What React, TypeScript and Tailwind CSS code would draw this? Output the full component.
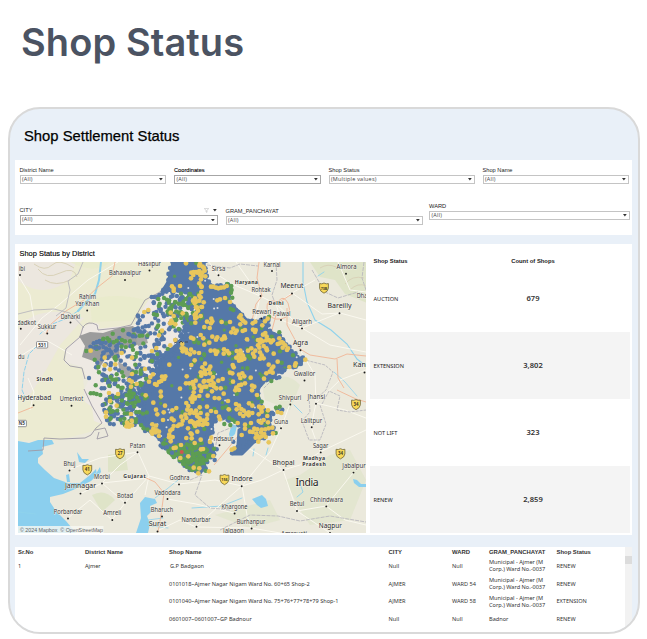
import React from "react";

type Pt = [number, number];

/* ---------- helpers for the point layer ---------- */

function createRandom(seed: number) {
  let s = seed;
  return () => {
    s = (s * 1664525 + 1013904223) % 4294967296;
    return s / 4294967296;
  };
}

function inside(x: number, y: number, poly: Pt[]) {
  let hit = false;
  for (let i = 0, j = poly.length - 1; i < poly.length; j = i++) {
    const [xi, yi] = poly[i];
    const [xj, yj] = poly[j];
    if (yi > y !== yj > y && x < ((xj - xi) * (y - yi)) / (yj - yi) + xi) hit = !hit;
  }
  return hit;
}

function scatter(poly: Pt[], count: number, seed: number): Pt[] {
  const rnd = createRandom(seed);
  const xs = poly.map((p) => p[0]);
  const ys = poly.map((p) => p[1]);
  const x0 = Math.min(...xs);
  const y0 = Math.min(...ys);
  const w = Math.max(...xs) - x0;
  const h = Math.max(...ys) - y0;
  const out: Pt[] = [];
  for (let n = 0; out.length < count && n < count * 30; n++) {
    const x = x0 + rnd() * w;
    const y = y0 + rnd() * h;
    if (inside(x, y, poly)) out.push([x, y]);
  }
  return out;
}

/* markers that straddle the border of an area, so its edge is bumpy */
function alongEdge(poly: Pt[], step: number, jitter: number, seed: number): Pt[] {
  const rnd = createRandom(seed);
  const out: Pt[] = [];
  poly.forEach(([x, y], i) => {
    const [nx, ny] = poly[(i + 1) % poly.length];
    const len = Math.hypot(nx - x, ny - y);
    for (let d = 0; d < len; d += step) {
      out.push([x + ((nx - x) * d) / len + (rnd() - 0.5) * jitter, y + ((ny - y) * d) / len + (rnd() - 0.5) * jitter]);
    }
  });
  return out;
}

function parse(list: string, ox: number, oy: number): Pt[] {
  return list
    .trim()
    .split(/\s+/)
    .map((p) => {
      const [x, y] = p.split(",").map(Number);
      return [ox + x / 3, oy + y / 3];
    });
}

const points = (poly: Pt[]) => poly.map((p) => p.join(",")).join(" ");

const BLUE = "#5578a8";
const GREEN = "#5d9d53";
const YELLOW = "#e8c65c";

const dense: Pt[] = [
  [173, 260], [205, 260], [204, 274], [207, 281], [215, 287], [229, 285], [230, 292], [229, 302], [240, 312],
  [248, 321], [255, 323], [263, 321], [267, 320], [267, 330], [276, 334], [282, 338], [290, 350], [297, 357],
  [304, 359], [301, 363], [289, 367], [278, 371], [273, 378], [266, 380], [260, 387], [257, 395], [258, 403],
  [263, 411], [271, 412], [269, 418], [272, 431], [261, 438], [248, 443], [243, 432], [240, 424], [228, 418],
  [217, 418], [213, 424], [211, 434], [205, 441], [213, 446], [214, 455], [205, 460], [205, 468], [197, 472],
  [186, 466], [176, 455], [164, 447], [159, 438], [146, 430], [139, 421], [144, 405], [141, 393], [149, 383],
  [157, 375], [160, 361], [168, 351], [176, 345], [184, 335], [189, 322], [197, 313], [196, 297], [184, 290],
  [171, 291], [162, 291], [168, 281],
];

const west: Pt[] = [
  [152, 298], [170, 293], [199, 302], [190, 324], [173, 344], [160, 360], [158, 374], [144, 385], [140, 421],
  [124, 424], [106, 420], [102, 400], [113, 394], [98, 378], [98, 361], [90, 347], [96, 341], [118, 336],
  [132, 332], [136, 315], [143, 308],
];
const southWest: Pt[] = [
  [103, 399], [125, 387], [145, 378], [150, 430], [124, 426], [106, 422],
];
const northGreen: Pt[] = [
  [178, 294], [200, 291], [203, 318], [190, 327], [174, 322], [166, 314],
];
const southGreen: Pt[] = [
  [158, 437], [169, 446], [184, 444], [204, 446], [211, 454], [203, 469], [194, 472], [184, 465], [171, 456],
];
const midBlue: Pt[] = [
  [155, 340], [185, 325], [195, 345], [165, 380], [140, 405], [115, 405], [128, 375],
];
const tail: Pt[] = [
  [239, 430], [262, 432], [252, 444], [242, 454], [233, 454], [238, 445],
];

const yellowEast = parse(
  `30,12 38,20 44,32 28,33 18,36 10,45 35,48 46,49 3,55 34,80 63,80 70,80 78,83 85,85 93,83 102,82 110,78 9,122 28,122 32,112
  34,141 24,152 18,160 14,165 20,172 16,188 32,168 82,121 90,118 105,114 120,126 43,201 16,174 51,185 64,176 67,184 63,190
  95,186 120,186 148,172 152,166 155,178 160,183 166,188 151,193 130,206 140,212 136,219 124,217 158,213 165,210 59,204 3,233
  10,236 40,235 67,230 58,248 43,254 32,225 78,239 82,232 96,238 105,235 103,229 171,238 188,190 196,185 189,209 197,210
  195,216 233,176 225,184 217,196 219,224 226,219 230,230 212,239 204,240 210,248 218,244 229,241 237,240 249,241 243,247
  204,256 208,263 221,258 229,265 196,272 184,265 174,272 268,235 275,246 269,250 263,252 280,249 286,256 278,263 291,270
  294,265 3,269 13,277 27,279 62,272 74,272 82,275 78,282 102,268 112,273 101,281 117,280 140,273 151,272 154,280 146,284
  159,287 139,293 151,294 163,296 155,300 147,302 189,281 193,290 210,277 215,286 210,296 221,295 231,271 251,281 263,305
  236,314 250,320 245,326 239,335 229,340 248,338 222,356 14,301 4,315 37,322 45,311 61,320 57,328 45,331 38,340 47,342
  60,340 69,351 64,361 55,363 43,363 17,362 32,337 10,374 35,384 33,393 49,380 61,375 71,370 85,362 71,379 79,385 92,385
  66,394 74,414 87,415 8,408 14,416 7,426 53,407 101,401 114,423 128,315 131,322 120,338 127,340 98,357 129,365 147,344
  157,340 163,349 151,354 154,374 165,370 147,376 139,383 147,390 136,391 182,353 186,377 193,380 186,391 201,405
  298,321 317,310 315,317 346,299 18,452 29,442 51,440 63,453 78,456 22,469 31,480 4,483 12,491 23,487 45,484 52,492 38,495
  29,493 16,498 51,477 52,464 87,470 90,478 116,448 138,432 147,437 140,448 154,447 161,452 150,461 160,468 169,461 176,457
  176,466 187,459 187,437 207,440 213,446 218,442 215,455 177,430 143,489 234,451 232,468 263,456 274,459 221,480 214,488
  234,487 206,463 206,483 183,489 165,494 165,506 180,515 193,506 188,516 202,508 215,509 226,508 236,505 247,503 249,520
  213,517 223,522 227,531 215,529 199,521 203,528 155,525 208,533 197,533 205,545 236,547 64,533 60,546 5,535 39,567
  33,568 70,588 133,565 125,569 57,634 25,640 2,520`,
  190, 260,
);
const yellowWest = parse(
  `333,10 387,24 373,17 382,38 376,45 367,38 356,36 349,38 378,58 373,70 380,80 379,96 291,79 296,86 296,93 315,78 373,107 360,115
  365,124 359,130 363,142 386,127 381,141 366,143 220,150 208,156 287,158 323,160 361,174 296,168 289,182 285,190 292,188
  301,193 261,212 252,226 244,264 231,273 286,256 322,252 301,240 320,265 326,265 333,269 335,278 323,274 345,283 140,279
  89,293 171,293 89,316 121,313 47,272 105,328 171,342 163,360 185,372 168,380 170,365 210,327 234,343 226,351
  222,365 240,372 252,366 261,350 271,349 268,357 259,363 245,375 283,314 315,386 335,349 333,370 343,370 353,366 379,347
  386,365 374,377 358,384 387,380 354,414 347,416 360,412 356,397 373,408 212,406 258,409 257,395 102,399 129,402 105,423
  125,437 93,470 93,457 168,462 156,488 160,493 171,496 154,499 162,500 170,482 235,428 243,449 247,463 266,457
  264,480 292,451 304,444 334,429 340,438 337,449 344,460 331,464 348,451 290,476 296,481 270,437 357,459 366,464 377,459
  319,470 323,482 334,474 320,493 313,494 345,485 308,498 296,498 292,507 286,512 283,524 293,531 282,532 354,487 365,489
  371,493 374,475 385,482 388,491 339,505 232,493 235,506 229,515 237,510 243,497 245,511 252,515 242,517 232,521 252,528
  367,515 350,523 334,534 377,539 287,544 302,563 296,564 318,555 359,549 340,589 316,594 373,625 356,623`,
  75, 260,
);
const blueExtra = parse(
  `230,111 237,111 246,110 253,105 194,181 189,190 257,153 250,182 221,198 176,210 174,229 190,214 267,169 262,101 265,89 288,110
  56,250 65,246 72,246 81,249 92,248 61,263 72,263 85,261 104,256 95,271 110,281 86,278 98,294 67,308 42,354 80,385 88,385
  83,435 88,450 96,480 105,491 141,439 116,493 291,578 276,561 100,364 82,361 63,322 108,310`,
  75, 260,
);
const greenExtra = parse(
  `144,211 113,221 103,240 85,236 97,235 59,299 70,321 47,400 56,400 65,402 76,405 62,376 116,247 34,273 250,117 254,131 282,128
  267,114 246,165 237,163 150,244 165,244 256,216 172,258 174,269 125,343 145,349 150,495 107,475 122,299 105,415`,
  75, 260,
);
const blueEast = parse(
  `262,449 277,449 250,462 268,455 336,295 331,302 310,322 283,331 276,337 260,354 268,352 72,582 80,568 74,600 52,606 40,622
  30,637 172,545 178,548 160,560 146,575 126,580 130,545 235,182 225,190 259,273 251,503 244,515`,
  190, 260,
);
const greenEast = parse(
  `19,9 28,75 124,78 112,72 125,90 123,98 127,113 17,240 13,246 26,248 46,250 51,243 43,204 122,146 130,150 93,182 153,207
  108,190 268,217 270,274 309,286 275,308 318,316 244,363 106,279 116,285 127,279 200,241 245,230 237,170 178,269 174,288
  180,295 172,325 155,358 217,349 71,340 27,350 52,386 106,383 140,401 205,413 215,425 98,443 109,440 120,450 118,474
  127,479 103,492 121,495 135,485 30,440 73,447 258,443 269,440 32,455 11,502 43,507 257,519 176,498 230,458 2,384 34,297
  12,306 87,271 42,283 12,548 24,554 35,550 46,566 27,578 11,589 50,600 20,608 72,566 47,632`,
  190, 260,
);

function Dots({ list, color, r = 2.2 }: { list: Pt[]; color: string; r?: number }) {
  return (
    <g fill={color}>
      {list.map(([x, y], i) => (
        <circle key={i} cx={x.toFixed(1)} cy={y.toFixed(1)} r={r} />
      ))}
    </g>
  );
}

/* ---------- map labels ---------- */

type Label = { t: string; x: number; y: number; w?: number; big?: boolean; dot?: Pt; region?: boolean };

const labels: Label[] = [
  { t: "Hasilpur", x: 149.5, y: 265.7, w: 23, dot: [149.5, 270.5] },
  { t: "Bahawalpur", x: 125, y: 275.3, w: 32, dot: [125, 280] },
  { t: "Rahim", x: 87.5, y: 299, w: 17 },
  { t: "Yar Khan", x: 87.2, y: 306, w: 24, dot: [87.2, 310.5] },
  { t: "Daharki", x: 70.5, y: 318.5, w: 19.5, dot: [70.5, 322.5] },
  { t: "dadkot", x: 26.5, y: 325, w: 19, dot: [20.8, 328.8] },
  { t: "Sukkur", x: 47, y: 329, w: 18.5, dot: [47.3, 333.5] },
  { t: "ibi", x: 22, y: 271, w: 6, dot: [20, 275] },
  { t: "du", x: 21.3, y: 359, w: 6.5 },
  { t: "Sindh", x: 44.7, y: 380.5, w: 16.5, region: true },
  { t: "Sirsa", x: 218.5, y: 270.6, w: 13.5, dot: [218.5, 275.3] },
  { t: "Karnal", x: 272, y: 266.7, w: 17, dot: [272, 271] },
  { t: "Haryana", x: 246.3, y: 283.5, w: 23, region: true },
  { t: "Rohtak", x: 261, y: 291.5, w: 19, dot: [260.5, 296] },
  { t: "Meerut", x: 292, y: 288, w: 23, big: true, dot: [292, 293.5] },
  { t: "Almora", x: 346.5, y: 269.2, w: 20, dot: [346, 273.7] },
  { t: "Delhi", x: 276, y: 305, w: 15, region: true },
  { t: "Rewari", x: 261.7, y: 313.7, w: 19, dot: [261.5, 318.5] },
  { t: "Palwal", x: 281.7, y: 315.5, w: 17.5, dot: [281, 320] },
  { t: "Aligarh", x: 302, y: 323.7, w: 20, dot: [302, 328.4] },
  { t: "Bareilly", x: 339.5, y: 308, w: 24, big: true, dot: [339.5, 313.2] },
  { t: "Agra", x: 300.5, y: 344.8, w: 15, big: true, dot: [300.5, 350.2] },
  { t: "Gwalior", x: 304.5, y: 376, w: 21.5, dot: [304.5, 380.5] },
  { t: "Kanp", x: 361.6, y: 367.3, w: 17, big: true, dot: [364.5, 372.5] },
  { t: "Dha", x: 362, y: 297.6, w: 10.5 },
  { t: "Hyderabad", x: 34.3, y: 400, w: 34, big: true, dot: [33.6, 405.2] },
  { t: "Umerkot", x: 71.5, y: 401.2, w: 23.5, dot: [71.5, 405.7] },
  { t: "Patan", x: 137.5, y: 447.7, w: 15.5, dot: [137.5, 452.2] },
  { t: "Bhuj", x: 69.5, y: 466, w: 12, dot: [69.5, 470.5] },
  { t: "Morbi", x: 102, y: 479, w: 16, dot: [102, 483.5] },
  { t: "Gujarat", x: 134.5, y: 478.3, w: 22.5, region: true },
  { t: "Godhra", x: 179.5, y: 480, w: 20, dot: [179, 484.4] },
  { t: "Jamnagar", x: 80.5, y: 488.3, w: 31, big: true, dot: [80.5, 493.6] },
  { t: "Botad", x: 125, y: 498.3, w: 16, dot: [125, 502.8] },
  { t: "Vadodara", x: 167.5, y: 494.5, w: 26, dot: [167.5, 499] },
  { t: "Porbandar", x: 68, y: 514, w: 28.5, dot: [68, 518.5] },
  { t: "Amreli", x: 112.3, y: 515.4, w: 18, dot: [112.3, 520] },
  { t: "Bharuch", x: 162, y: 512, w: 22.5, dot: [162, 516.5] },
  { t: "Surat", x: 157.5, y: 526.3, w: 17.5, big: true, dot: [157.5, 531.5] },
  { t: "Shivpuri", x: 290, y: 399.7, w: 22.5, dot: [290.3, 404.5] },
  { t: "Jhansi", x: 316.3, y: 399.2, w: 17.5, dot: [316, 403.8] },
  { t: "Guna", x: 281, y: 423.7, w: 14, dot: [281, 428.2] },
  { t: "Lalitpur", x: 311.5, y: 422.5, w: 21.5, dot: [311.7, 427.2] },
  { t: "Sagar", x: 320.7, y: 447.7, w: 15.5, dot: [320.7, 452.4] },
  { t: "Madhya", x: 314, y: 460, w: 22, region: true },
  { t: "Pradesh", x: 314, y: 466.4, w: 23.5, region: true },
  { t: "Jabalpur", x: 354, y: 468, w: 23.5, dot: [353.5, 472.6] },
  { t: "ndsaur", x: 223.5, y: 441, w: 20, dot: [219.5, 445.3] },
  { t: "Bhopal", x: 283.5, y: 464.7, w: 22, big: true, dot: [283.5, 470] },
  { t: "Indore", x: 242, y: 480.9, w: 21, big: true, dot: [241.7, 486.3] },
  { t: "Betul", x: 297, y: 506.4, w: 14.5, dot: [297, 511] },
  { t: "Chhindwara", x: 326.5, y: 501.7, w: 33, dot: [326.3, 506.4] },
  { t: "Khargone", x: 234.5, y: 508.8, w: 26, dot: [234.6, 513.5] },
  { t: "Nandurbar", x: 196, y: 522.4, w: 29, dot: [196.5, 526.8] },
  { t: "Burhanpur", x: 251, y: 524, w: 28.5, dot: [251.6, 528.5] },
  { t: "Nagpur", x: 330.3, y: 528, w: 23, big: true, dot: [330, 533] },
  { t: "Jalgaon", x: 233.5, y: 533.4, w: 21 },
  { t: "Amravati", x: 294, y: 535.8, w: 26 },
];

function MapLabels() {
  return (
    <g textAnchor="middle" fontFamily="'Noto Sans', 'Open Sans', sans-serif" stroke="#f6f4ea" strokeLinejoin="round" paintOrder="stroke">
      {labels.map((l) => (
        <g key={l.t}>
          <text
            x={l.x}
            y={l.y}
            fontSize={l.big ? 7.1 : l.region ? 5.2 : 6.3}
            fontWeight={l.region ? 700 : 400}
            strokeWidth={0.9}
            fill={l.big ? "#26272a" : "#36373b"}
            textLength={l.w}
            lengthAdjust={l.region ? "spacing" : "spacingAndGlyphs"}
          >
            {l.t}
          </text>
          {l.dot && <circle cx={l.dot[0]} cy={l.dot[1]} r={0.95} fill="#1d1d1d" stroke="none" />}
        </g>
      ))}
      <text x={307} y={486.3} fontSize={10.4} strokeWidth={1} fill="#1d1d1d" textLength={23}>
        India
      </text>
    </g>
  );
}

function Shield({ x, y, t }: { x: number; y: number; t: string }) {
  return (
    <g>
      <path
        d={`M${x - 4.4} ${y - 4.4}q2.2 .8 4.4 -.6q2.2 1.4 4.4 .6v4.6q-.4 3.4 -4.4 5q-4 -1.6 -4.4 -5z`}
        fill="#f8d95a"
        stroke="#6f6436"
        strokeWidth={0.8}
      />
      <text x={x} y={y + 1.7} fontSize={t.length > 2 ? 3.7 : 4.4} fontWeight={700} textAnchor="middle" fill="#3d3a28" fontFamily="'Noto Sans', sans-serif">
        {t}
      </text>
    </g>
  );
}

function RoadBox({ x, y, w, t }: { x: number; y: number; w: number; t: string }) {
  return (
    <g>
      <rect x={x} y={y} width={w} height={6.4} rx={0.8} fill="#fff" stroke="#77797c" strokeWidth={0.8} />
      <text x={x + w / 2} y={y + 4.9} fontSize={4.6} fontWeight={700} textAnchor="middle" fill="#444" fontFamily="'Noto Sans', sans-serif">
        {t}
      </text>
    </g>
  );
}

function DistrictMap() {
  return (
    <svg viewBox="18 262 348.5 271" className="block h-[271px] w-[348.5px] shrink-0" role="img" aria-label="Shop Status by District">
      <rect x="18" y="262" width="349" height="271" fill="#ebe9dc" />
      <path d="M18 262H178L170 285 150 298 143 308 135 325 118 330 95 328 90 325 85 335 66 349 65 364 82 368 84 388 103 424 97 430 60 440 18 441z" fill="#ecebd2" />
      <path d="M18 281Q45 300 70 279L76 262H18zM18 330Q30 310 62 312L84 318 60 345 46 370 30 395 18 400z" fill="#ece7df" />
      <path d="M70 262Q95 275 110 262zM90 300Q115 292 145 300L136 320 92 322z" fill="#e8ebc9" opacity=".7" />
      <g fill="#dbe3c2" opacity=".75">
        <path d="M310 262H367V303L345 294 335 280 320 277z" />
        <path d="M108 455L125 452 128 470 108 472z" />
        <path d="M285 480L300 475 330 455 350 450 366 480 350 520 310 525 300 510z" opacity=".6" />
        <path d="M215 515L270 500 280 520 250 528z" opacity=".6" />
        <path d="M262 385Q285 368 300 385L290 410 265 400z" opacity=".6" />
        <path d="M92 495Q105 488 115 500L102 512z" />
      </g>
      <g fill="none" stroke="#d9d2b8" strokeWidth="1">
        <path d="M34 264Q45 272 52 265T74 268M38 269Q46 280 60 273T77 277M45 280Q56 287 70 280" />
        <path d="M345 284Q352 275 364 278M350 290Q358 282 366 286M320 268Q328 263 336 267" />
      </g>
      <path d="M66 348Q83 336 81 331Q86 323 94 323T98 329L112 327 134 325 137 318 150 298 200 294 200 340 130 420 102 424 94 421 92 407 85 402 84 390 88 381 83 367 66 362z" fill="#eee9e3" />

      {/* water */}
      <g fill="#8bcfee">
        <path d="M18 441L29 443 38 440 52 440 54 444 42 447 43 454 38 458 38 463 45 470 54 478 68 483 80 483 90 475 96 469 97 475 91 481 73 490 63 494 50 497 50 502 56 511 66 521 76 533H18z" />
        <path d="M136 533L141 518 140 503 145 497 155 499 157 503 150 506 151 512 147 516 150 524 148 533z" />
        <path d="M77 452L82 459 89 459 85 463 79 462zM66 475L69 474 70 482 67 482zM97 472L100 467 101 472 97 477z" />
        <path d="M232 424L237 426 235 434 230 439 229 434zM252 499L262 495 266 499 268 506 261 508 257 505z" />
        <path d="M353 479L357 480 361 484 366 484V487L359 487 354 483z" />
      </g>
      <g fill="none" stroke="#8fd2ec" strokeLinecap="round">
        <path d="M101 262L99 280 95 294 86 302 78 311" strokeWidth="2" />
        <path d="M78 311L65 319 50 325 40 334M37 346L29 354 24 372 22 390 25 397" strokeWidth="1" strokeDasharray="4 2" />
        <path d="M303 262L303 282 307 302 315 320 331 330 347 344 357 359 366 366" strokeWidth="1.1" />
        <path d="M318 276L324 272M302 413L294 405M300 484L303 492 297 497M254 449L253 456M268 448L266 455M18 512L36 514M192 508L222 506 242 498" strokeWidth=".9" />
        <path d="M155 498L167 489 178 480M148 520L163 518M152 526L168 528M334 372L345 382 357 396" strokeWidth=".8" />
      </g>

      {/* roads */}
      <g fill="none" stroke="#faf8ef" strokeWidth="1">
        <path d="M18 275L30 295 35 325 47 333M20 345L42 318 60 304 88 280 118 262M22 355L46 340 72 355M28 378L34 392 30 410" />
        <path d="M209 262L218 275 232 284 260 296 276 304 292 293 315 280M292 293L322 314 340 313 366 320M276 304L281 320 302 328 339 313M276 304L302 328 330 345 366 352" />
        <path d="M300 350L315 375 316 403 311 427 320 452 300 465 283 470M316 403L340 380 366 370M316 403L345 410 366 418M320 452L345 440 366 430M290 404L281 428 270 452 242 486M283 470L262 480 242 486 220 505 196 527" />
        <path d="M242 486L247 515 251 528 280 533M283 470L297 511 330 533M326 506L353 473M326 506L345 520 366 525M297 511L326 506" />
        <path d="M138 452L120 465 102 483 80 494M138 452L149 476 125 503 112 520M149 476L179 484 215 480 242 486M149 476L145 495M102 483L125 503M68 518L90 500 112 520M68 470L100 458 138 452M167 499L196 504 234 513M157 531L180 520 196 527 251 528M102 483L149 478" />
        <path d="M236 262L260 296 255 322M338 262L350 290 366 292M235 440L258 454 283 470" />
      </g>
      <g fill="none" stroke="#f1b596" strokeWidth=".9">
        <path d="M115 262L112 276 98 287 84 300 66 311 50 325 46 334M18 413L33 407" />
        <path d="M259 262L257 278 262 296 256 304 252 320M278 302Q266 298 267 308Q269 321 281 319T288 303Q283 294 278 302" />
        <path d="M276 304L292 294M287 308L287 325 300 349 310 355 335 359 347 354 366 356M337 359L338 378 344 388M276 315L272 330 270 343M214 465L230 446 238 436M144 477L155 482 164 493 161 515 158 532M337 390L356 399 366 402" />
      </g>
      <g fill="none" stroke="#b9b8bd" strokeWidth=".9">
        <path d="M83 262L78 274 68 281 70 290 66 308 56 316M18 314L34 310 54 309 70 313 84 328" />
        <path d="M178 262L171 278 160 292 145 300 141 307 131 325 118 328 98 330 97 325Q88 320 83 327L80 337 66 349 64 360 70 366 82 368 85 379M84 389L92 406 102 423 96 428 91 435 85 438 60 439 44 438 43 450 28 451M95 430L105 428 108 436 97 439 99 432" stroke="#9e9aa5" />
        <path d="M207 265L230 268 240 264 258 266M276 262L277 280 272 295 275 303M312 270L325 292 338 298 358 292M364 262L362 278 366 290" strokeDasharray="4 1" />
        <path d="M264 388L280 372 305 360 325 365 333 372 326 390 318 397M322 404L329 391 340 396 337 410 350 412 366 410M309 397L310 412 302 421 309 440 320 440 326 424 320 405" strokeDasharray="3 1" />
        <path d="M190 480L202 475 195 495 210 508 230 510M220 530L250 515 278 516 300 521 330 516 366 522M215 450L218 433 240 424" strokeDasharray="4 1" />
      </g>

      {/* desert block behind the markers */}
      <path d="M79 336L90 332 103 333 118 328 133 326 139 332 139 344 130 348 119 345 120 361 107 356 97 372 96 362 82 357 85 346z" fill="#9c9c9c" />
      <path d="M133 327L145 333 148 343 138 346zM118 362L140 372 132 380 120 374zM146 330l5 4-3 4z" fill="#a5a5a5" />

      <g>
        <polygon points={points(dense)} fill={BLUE} stroke={BLUE} strokeWidth="2" strokeLinejoin="round" />
        <Dots list={alongEdge(dense, 3.6, 3.4, 8)} color={BLUE} r={2.3} />
        <Dots list={scatter(dense, 34, 44)} color="#d9dde0" r={1} />
        <polygon points={points(tail)} fill={BLUE} stroke={BLUE} strokeWidth="3" strokeLinejoin="round" />
        <Dots list={scatter(west, 165, 7)} color={BLUE} />
        <Dots list={scatter(midBlue, 115, 91)} color={BLUE} />
        <Dots list={scatter(southWest, 60, 19)} color={BLUE} />
        <Dots list={scatter(west, 60, 23)} color={GREEN} />
        <Dots list={scatter(northGreen, 60, 5)} color={GREEN} />
        <Dots list={scatter(northGreen, 14, 57)} color={BLUE} />
        <Dots list={scatter(southWest, 40, 31)} color={GREEN} />
        <Dots list={scatter(southGreen, 110, 13)} color={GREEN} />
        <Dots list={scatter(dense, 45, 77)} color={GREEN} r={1.7} />
        <Dots list={blueExtra} color={BLUE} />
        <Dots list={greenExtra} color={GREEN} />
        <Dots list={blueEast} color={BLUE} />
        <Dots list={greenEast} color={GREEN} />
        <Dots list={yellowWest} color={YELLOW} r={2.35} />
        <Dots list={yellowEast} color={YELLOW} r={2.35} />
        <circle cx="181.7" cy="452" r="2" fill="#d0544f" />
      </g>
      <path d="M174 343l3-1m2 1l2-2 2 2m2-1h3" stroke="#3c4046" strokeWidth=".8" fill="none" />

      <Shield x={324} y={288} t="73B" />
      <Shield x={356} y={404.5} t="34" />
      <Shield x={340.5} y={453.7} t="34" />
      <Shield x={120} y={453.7} t="27" />
      <Shield x={87.3} y={469.7} t="41" />
      <Shield x={224.5} y={479.5} t="156" />
      <RoadBox x={36.5} y={341.6} w={11.2} t="531" />
      <RoadBox x={17} y={420.3} w={9.4} t="N5" />
      <MapLabels />
      <rect x="18" y="526" width="85.5" height="7" fill="#f7f7f3" opacity=".8" />
      <text x="20" y="531.6" fontSize="5.3" fill="#5f6164" fontFamily="'Liberation Sans', Arial, sans-serif" textLength="83" xmlSpace="preserve">
        © 2024 Mapbox  © OpenStreetMap
      </text>
    </svg>
  );
}

/* ---------- filters ---------- */

function Caret() {
  return (
    <svg viewBox="0 0 6 4" className="h-[2.5px] w-[3.8px] shrink-0" aria-hidden="true">
      <path d="M0 0h6L3 4z" fill="#333" />
    </svg>
  );
}

function Filter({ label, value, className, strong, tools }: { label: string; value: string; className: string; strong?: boolean; tools?: boolean }) {
  return (
    <div className={className}>
      <div className="flex h-[9px] items-center justify-between pr-[1px]">
        <span className={strong ? "text-[5.7px] text-black [-webkit-text-stroke:0.1px]" : "text-[5.7px] text-[#222]"}>{label}</span>
        {tools && (
          <span className="flex items-center gap-[4px]">
            <svg viewBox="0 0 6 6" className="size-[5px]" aria-hidden="true">
              <path d="M.4.5h5.2L3.6 3v2.2L2.4 4.6V3z" fill="none" stroke="#bbb" strokeWidth=".7" />
            </svg>
            <Caret />
          </span>
        )}
      </div>
      <div
        className={`flex h-[9.5px] items-center justify-between border pr-[2px] pl-[1.5px] font-['Open_Sans','Noto_Sans',sans-serif] text-[5.5px] leading-none tracking-[0.22px] text-[#444] ${
          strong || tools ? "border-[#a6a6a6]" : "border-[#c4c4c4]"
        }`}
      >
        <span>{value}</span>
        <Caret />
      </div>
    </div>
  );
}

/* ---------- summary and table ---------- */

const summary = [
  { name: "AUCTION", count: "679" },
  { name: "EXTENSION", count: "3,802" },
  { name: "NOT LIFT", count: "323" },
  { name: "RENEW", count: "2,859" },
];

const municipal = ["Municipal - Ajmer (M", "Corp.) Ward No.-0037"];
const rows = [
  { no: "1", district: "Ajmer", shop: "G.P Badgaon", city: "Null", ward: "Null", gram: municipal, status: "RENEW" },
  { no: "", district: "", shop: "0101018~Ajmer Nagar Nigam Ward No. 60+65 Shop-2", city: "AJMER", ward: "WARD 54", gram: municipal, status: "RENEW" },
  { no: "", district: "", shop: "0101040~Ajmer Nagar Nigam Ward No. 75+76+77+78+79 Shop-1", city: "AJMER", ward: "WARD 58", gram: municipal, status: "EXTENSION" },
  { no: "", district: "", shop: "0601007~0601007~GP Badnour", city: "Null", ward: "Null", gram: ["Badnor"], status: "RENEW" },
];

const columns = "grid grid-cols-[67px_84px_219.5px_63.5px_37px_67.5px_1fr] items-center whitespace-nowrap pl-[3px]";

export default function App() {
  return (
    <div className="h-[639px] w-[647px] overflow-hidden bg-white font-['Liberation_Sans',Arial,sans-serif]">
      <h1 className="h-[107px] pt-[17px] pl-[21px] font-['Inter',sans-serif] text-[38px] leading-[50px] font-semibold tracking-[0.1px] text-[#4b5362]">
        Shop Status
      </h1>

      <main className="ml-[8px] h-[527px] w-[632px] overflow-hidden rounded-[32px] border-[2.5px] border-[#d9d9d9] bg-[#e9f0f8] pl-[5px]">
        <h2 className="h-[51px] pt-[17px] pl-[9px] text-[14.8px] leading-[20px] text-black [-webkit-text-stroke:0.25px]">
          Shop Settlement Status
        </h2>

        <section className="h-[75px] w-[617px] bg-white pt-[5.5px] pl-[4.5px]">
          <div className="flex gap-[8px]">
            <Filter label="District Name" value="(All)" className="w-[146.5px]" />
            <Filter label="Coordinates" value="(All)" className="w-[146.5px]" strong />
            <Filter label="Shop Status" value="(Multiple values)" className="w-[146px]" />
            <Filter label="Shop Name" value="(All)" className="w-[146px]" />
          </div>
          <div className="mt-[17.5px] flex">
            <Filter label="CITY" value="(All)" className="mt-[4.5px] w-[198.5px]" tools />
            <Filter label="GRAM_PANCHAYAT" value="(All)" className="mt-[5px] ml-[7.5px] w-[197px]" />
            <Filter label="WARD" value="(All)" className="ml-[6.5px] w-[201px]" />
          </div>
        </section>

        <section className="mt-[9px] h-[291px] w-[617px] bg-white">
          <div className="flex gap-[4px] pl-[2.5px]">
            <div>
              <h3 className="h-[17.5px] pt-[4.5px] pl-[2px] text-[7.45px] leading-[9px] text-black [-webkit-text-stroke:0.12px]">
                Shop Status by District
              </h3>
              <DistrictMap />
            </div>
            <div className="w-[260px] pt-[14px]">
              <div className="flex h-[7px] items-center pl-[3.5px] text-[5.85px] font-bold text-[#222]">
                <span className="w-[108px]">Shop Status</span>
                <span className="w-[103px] text-center">Count of Shops</span>
              </div>
              <div className="font-['Noto_Sans',sans-serif]">
                {summary.map((s, i) => (
                  <div key={s.name} className={`flex h-[67.1px] items-center pl-[3.5px] ${i % 2 ? "bg-[#f4f4f4]" : ""}`}>
                    <span className="w-[108px] pt-[1px] text-[5.6px] text-[#222]">{s.name}</span>
                    <span className="w-[103px] text-center text-[7.6px] font-semibold text-[#333]">{s.count}</span>
                  </div>
                ))}
              </div>
            </div>
          </div>
        </section>

        <section className="mt-[11.5px] flex h-[90px] w-[617px]">
          <div className="w-[610px] bg-white">
            <div className={`${columns} h-[12.6px] text-[5.9px] font-bold text-[#333]`}>
              <span>Sr.No</span>
              <span>District Name</span>
              <span>Shop Name</span>
              <span>CITY</span>
              <span>WARD</span>
              <span>GRAM_PANCHAYAT</span>
              <span>Shop Status</span>
            </div>
            {rows.map((r) => (
              <div key={r.shop} className={`${columns} h-[17.85px] pb-[4px] font-['Noto_Sans',sans-serif] text-[5.58px] leading-[7.3px] text-[#333]`}>
                <span>{r.no}</span>
                <span>{r.district}</span>
                <span className={r.no ? "pl-[1px]" : ""}>{r.shop}</span>
                <span>{r.city}</span>
                <span>{r.ward}</span>
                <span>
                  {r.gram.map((g) => (
                    <span key={g} className="block">{g}</span>
                  ))}
                </span>
                <span>{r.status}</span>
              </div>
            ))}
          </div>
          <div className="w-[7px] bg-[#f2f2f2] pt-[9px]">
            <div className="h-[8px] bg-[#dcdcdc]" />
          </div>
        </section>
      </main>
    </div>
  );
}
